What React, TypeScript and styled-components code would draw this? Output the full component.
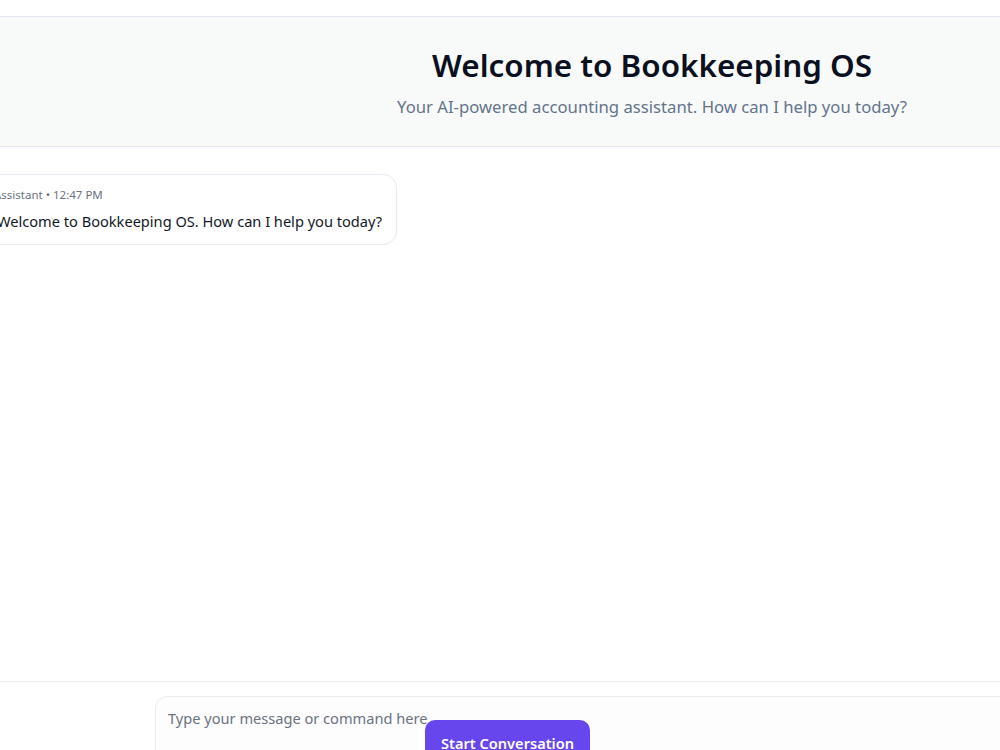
import React from "react";
import styled, { createGlobalStyle } from "styled-components";

const Global = createGlobalStyle`
  html, body {
    margin: 0;
    padding: 0;
    background: #ffffff;
    overflow: hidden;
    width: 1000px;
    height: 750px;
  }
  body {
    font-family: "Noto Sans", "Open Sans", Arial, sans-serif;
    color: #0f172a;
  }
  * { box-sizing: border-box; }
`;

const Page = styled.div`
  width: 1340px;
  height: 750px;
  margin-left: -18px;
  display: flex;
  flex-direction: column;
`;

const TopStrip = styled.div`
  height: 17px;
  flex: none;
  border-bottom: 1px solid #e2e8f0;
`;

const Header = styled.header`
  flex: none;
  height: 130px;
  background: #f8fafa;
  border-bottom: 1px solid #e6e8f0;
  box-shadow: 0 1px 2px rgba(99, 102, 241, 0.06);
  display: flex;
  flex-direction: column;
  align-items: center;
  padding-top: 28px;
  gap: 10px;
`;

const Title = styled.h1`
  margin: 0;
  font-size: 31.4px;
  line-height: 40px;
  font-weight: 600;
  color: #0b1020;
`;

const Subtitle = styled.p`
  margin: 0;
  font-size: 16.7px;
  line-height: 24px;
  color: #64748b;
`;

const Messages = styled.main`
  flex: 1;
  padding-top: 27px;
  display: flex;
  flex-direction: column;
  align-items: flex-start;
`;

const Bubble = styled.div`
  width: 415px;
  padding: 12px 14px 11px 14px;
  border: 1px solid #e6e9ef;
  border-radius: 14px;
  background: #ffffff;
  display: flex;
  flex-direction: column;
  gap: 6px;
`;

const Meta = styled.div`
  margin-left: -3px;
  font-size: 11.5px;
  line-height: 16px;
  color: #6b7280;
`;

const Text = styled.div`
  font-size: 14.6px;
  line-height: 24px;
  color: #111827;
  white-space: nowrap;
`;

const Footer = styled.footer`
  flex: none;
  height: 69px;
  border-top: 1px solid #eef1f2;
  padding: 14px 173px 0;
`;

const InputBox = styled.div`
  height: 80px;
  border: 1px solid #e8ebf0;
  border-radius: 12px;
  background: #fdfdfe;
  display: flex;
  align-items: flex-start;
  padding: 0 0 0 12px;
`;

const Placeholder = styled.div`
  width: 257px;
  padding-top: 11px;
  font-size: 14.6px;
  line-height: 20px;
  color: #6b7280;
  white-space: nowrap;
`;

const Button = styled.button`
  margin-top: 23px;
  width: 165px;
  padding: 12px 0;
  border: none;
  border-radius: 10px;
  background: #6846ee;
  color: #ffffff;
  font-family: inherit;
  font-size: 14.6px;
  line-height: 22px;
  font-weight: 600;
`;

export default function App() {
  return (
    <>
      <Global />
      <Page>
        <TopStrip />
        <Header>
          <Title>Welcome to Bookkeeping OS</Title>
          <Subtitle>Your AI-powered accounting assistant. How can I help you today?</Subtitle>
        </Header>
        <Messages>
          <Bubble>
            <Meta>Assistant • 12:47 PM</Meta>
            <Text>Welcome to Bookkeeping OS. How can I help you today?</Text>
          </Bubble>
        </Messages>
        <Footer>
          <InputBox>
            <Placeholder>Type your message or command here</Placeholder>
            <Button>Start Conversation</Button>
          </InputBox>
        </Footer>
      </Page>
    </>
  );
}
